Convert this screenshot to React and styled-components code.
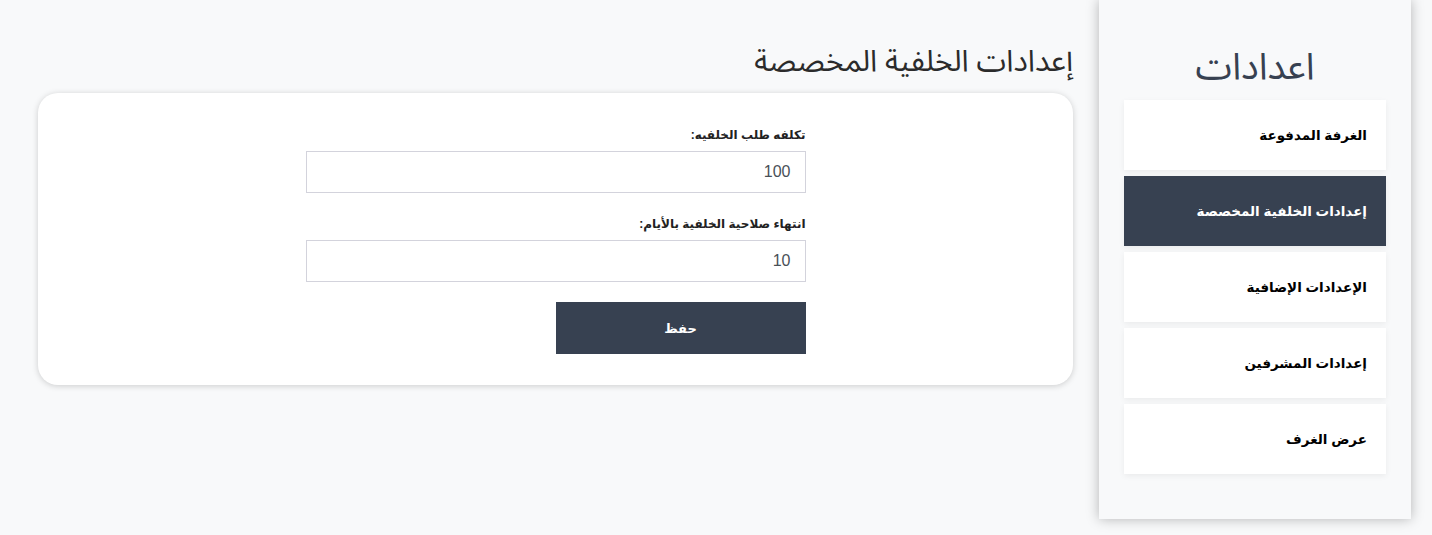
import React from 'react'
import styled, { createGlobalStyle } from 'styled-components'

const GlobalStyle = createGlobalStyle`
   html, body {
      margin: 0;
      padding: 0;
      background: #f8f9fa;
   }
   body {
      font-family: Arial, "Liberation Sans", "DejaVu Sans", sans-serif;
   }
`

const menuItems = [
   'الغرفة المدفوعة',
   'إعدادات الخلفية المخصصة',
   'الإعدادات الإضافية',
   'إعدادات المشرفين',
   'عرض الغرف',
]

const App = () => {
   return (
      <Page dir="rtl">
         <GlobalStyle />
         <Sidebar>
            <SidebarTitle>اعدادات</SidebarTitle>
            <Menu>
               {menuItems.map((item, i) => (
                  <MenuItem key={item} $active={i === 1}>
                     {item}
                  </MenuItem>
               ))}
            </Menu>
         </Sidebar>
         <Main>
            <PageTitle>إعدادات الخلفية المخصصة</PageTitle>
            <Card>
               <Form>
                  <Field>
                     <Label>تكلفه طلب الخلفيه:</Label>
                     <Input type="text" defaultValue="100" />
                  </Field>
                  <Field>
                     <Label>انتهاء صلاحية الخلفية بالأيام:</Label>
                     <Input type="text" defaultValue="10" />
                  </Field>
                  <SaveButton type="button">حفظ</SaveButton>
               </Form>
            </Card>
         </Main>
      </Page>
   )
}
export default App

const Page = styled.div`
   display: flex;
   align-items: flex-start;
   gap: 26px;
   padding-right: 21px;
   padding-left: 38px;
   min-height: 535px;
   box-sizing: border-box;
`
const Sidebar = styled.aside`
   width: 312px;
   height: 519px;
   flex-shrink: 0;
   background: #f8f9fa;
   box-shadow: 0 0 12px rgba(0, 0, 0, 0.28);
   box-sizing: border-box;
   padding: 44px 25px 0;
`
const SidebarTitle = styled.h1`
   margin: 0 0 10px;
   text-align: center;
   font-family: "Noto Sans Arabic", "Noto Sans", "DejaVu Sans", sans-serif;
   font-weight: 400;
   font-size: 37px;
   line-height: 46px;
   color: #374151;
`
const Menu = styled.nav`
   display: flex;
   flex-direction: column;
   gap: 6px;
`
const MenuItem = styled.div`
   height: 70px;
   display: flex;
   align-items: center;
   padding: 0 19px;
   background: ${(p) => (p.$active ? '#374151' : '#fff')};
   color: ${(p) => (p.$active ? '#fff' : '#000')};
   font-weight: 700;
   font-size: 13.5px;
   box-shadow: 0 2px 6px rgba(0, 0, 0, 0.06);
   cursor: pointer;
`
const Main = styled.main`
   flex: 1;
   padding-top: 42px;
`
const PageTitle = styled.h2`
   margin: 0 0 11px;
   font-family: "Noto Sans Arabic", "Noto Sans", "DejaVu Sans", sans-serif;
   font-weight: 400;
   font-size: 30px;
   line-height: 40px;
   color: #2b2b2b;
`
const Card = styled.section`
   background: #fff;
   border-radius: 20px;
   box-shadow: 0 1px 6px rgba(0, 0, 0, 0.18);
   padding: 34px 0 31px;
   display: flex;
   justify-content: center;
`
const Form = styled.form`
   width: 500px;
   display: flex;
   flex-direction: column;
   gap: 23px;
`
const Field = styled.div`
   display: flex;
   flex-direction: column;
   gap: 7px;
`
const Label = styled.label`
   font-weight: 700;
   font-size: 12px;
   line-height: 17px;
   color: #222;
`
const Input = styled.input`
   height: 42px;
   box-sizing: border-box;
   border: 1px solid #d3d3dc;
   padding: 0 14px;
   font-family: Arial, "Liberation Sans", sans-serif;
   font-size: 16px;
   color: #495057;
   background: #fff;
   outline: none;
`
const SaveButton = styled.button`
   align-self: flex-start;
   margin-top: -3px;
   width: 250px;
   height: 52px;
   border: none;
   background: #374151;
   color: #fff;
   font-family: Arial, "Liberation Sans", "DejaVu Sans", sans-serif;
   font-weight: 700;
   font-size: 13px;
   cursor: pointer;
`
